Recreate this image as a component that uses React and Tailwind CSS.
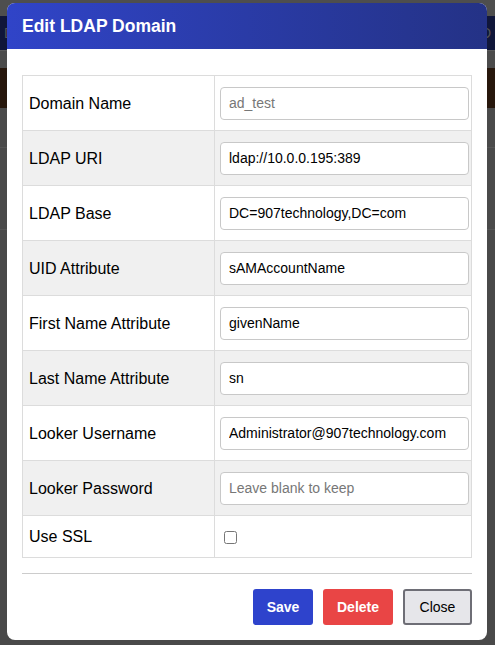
import React from "react";

const rows = [
  { label: "Domain Name", value: "", placeholder: "ad_test" },
  { label: "LDAP URI", value: "ldap://10.0.0.195:389" },
  { label: "LDAP Base", value: "DC=907technology,DC=com" },
  { label: "UID Attribute", value: "sAMAccountName" },
  { label: "First Name Attribute", value: "givenName" },
  { label: "Last Name Attribute", value: "sn" },
  { label: "Looker Username", value: "Administrator@907technology.com" },
  { label: "Looker Password", value: "", placeholder: "Leave blank to keep" },
];

export default function App() {
  return (
    <div className="relative h-[645px] w-[495px] overflow-hidden bg-[#494949] font-['Liberation_Sans',Arial,sans-serif]">
      {/* backdrop page */}
      <div className="flex flex-col">
        <div className="h-[16px] bg-[#4e4e4e]" />
        <div className="flex h-[34px] items-center justify-between bg-[#10163a] px-[4px] text-[14px] text-[#555]">
          <span>D</span>
          <span>D</span>
        </div>
        <div className="h-[18px] border-t border-[#5a5a5a] bg-[#4b4b4b]" />
        <div className="h-[40px] bg-[#27170c]" />
        <div className="h-[40px] border-b border-[#555] bg-[#4a4a4a]" />
        <div className="h-[82px] border-b border-[#555] bg-[#4a4a4a]" />
      </div>

      {/* modal */}
      <div className="absolute left-[7px] top-[3px] flex w-[480px] flex-col overflow-hidden rounded-[8px] bg-white">
        <div className="flex h-[46px] items-center bg-gradient-to-r from-[#3044c8] to-[#243286] px-[15px]">
          <h2 className="text-[17.5px] font-bold text-white">Edit LDAP Domain</h2>
        </div>
        <div className="flex flex-col px-[15px] pb-[15px] pt-[26px]">
          <table className="w-[450px] border-collapse text-[16px] text-black">
            <tbody>
              {rows.map((r, i) => (
                <tr key={r.label} className={i % 2 === 1 ? "bg-[#f0f0f0]" : "bg-white"}>
                  <td className="h-[55px] w-[192px] border border-[#dcdcdc] pl-[6px] pt-[2px]">{r.label}</td>
                  <td className="h-[55px] border border-[#dcdcdc] pl-[5px] pr-[2px]">
                    <input
                      readOnly
                      value={r.value}
                      placeholder={r.placeholder}
                      className="h-[33px] w-full rounded-[4px] border border-[#c8c8c8] bg-white px-[8px] text-[14px] text-black outline-none placeholder:text-[#777]"
                    />
                  </td>
                </tr>
              ))}
              <tr className="bg-white">
                <td className="h-[42px] border border-[#dcdcdc] pl-[6px]">Use SSL</td>
                <td className="h-[42px] border border-[#dcdcdc] pl-[5px]">
                  <input type="checkbox" className="ml-[4px] h-[13px] w-[13px] align-middle" />
                </td>
              </tr>
            </tbody>
          </table>
          <div className="mt-[15px] h-px w-[450px] bg-[#cccccc]" />
          <div className="mt-[15px] flex justify-end gap-[10px] text-[14px]">
            <button className="h-[36px] w-[60px] rounded-[3px] bg-[#2e43cc] font-bold text-white">Save</button>
            <button className="h-[36px] w-[70px] rounded-[3px] bg-[#e94545] font-bold text-white">Delete</button>
            <button className="h-[36px] w-[69px] rounded-[3px] border-2 border-[#6e6e76] bg-[#e6e6ea] text-black">Close</button>
          </div>
        </div>
      </div>
    </div>
  );
}
